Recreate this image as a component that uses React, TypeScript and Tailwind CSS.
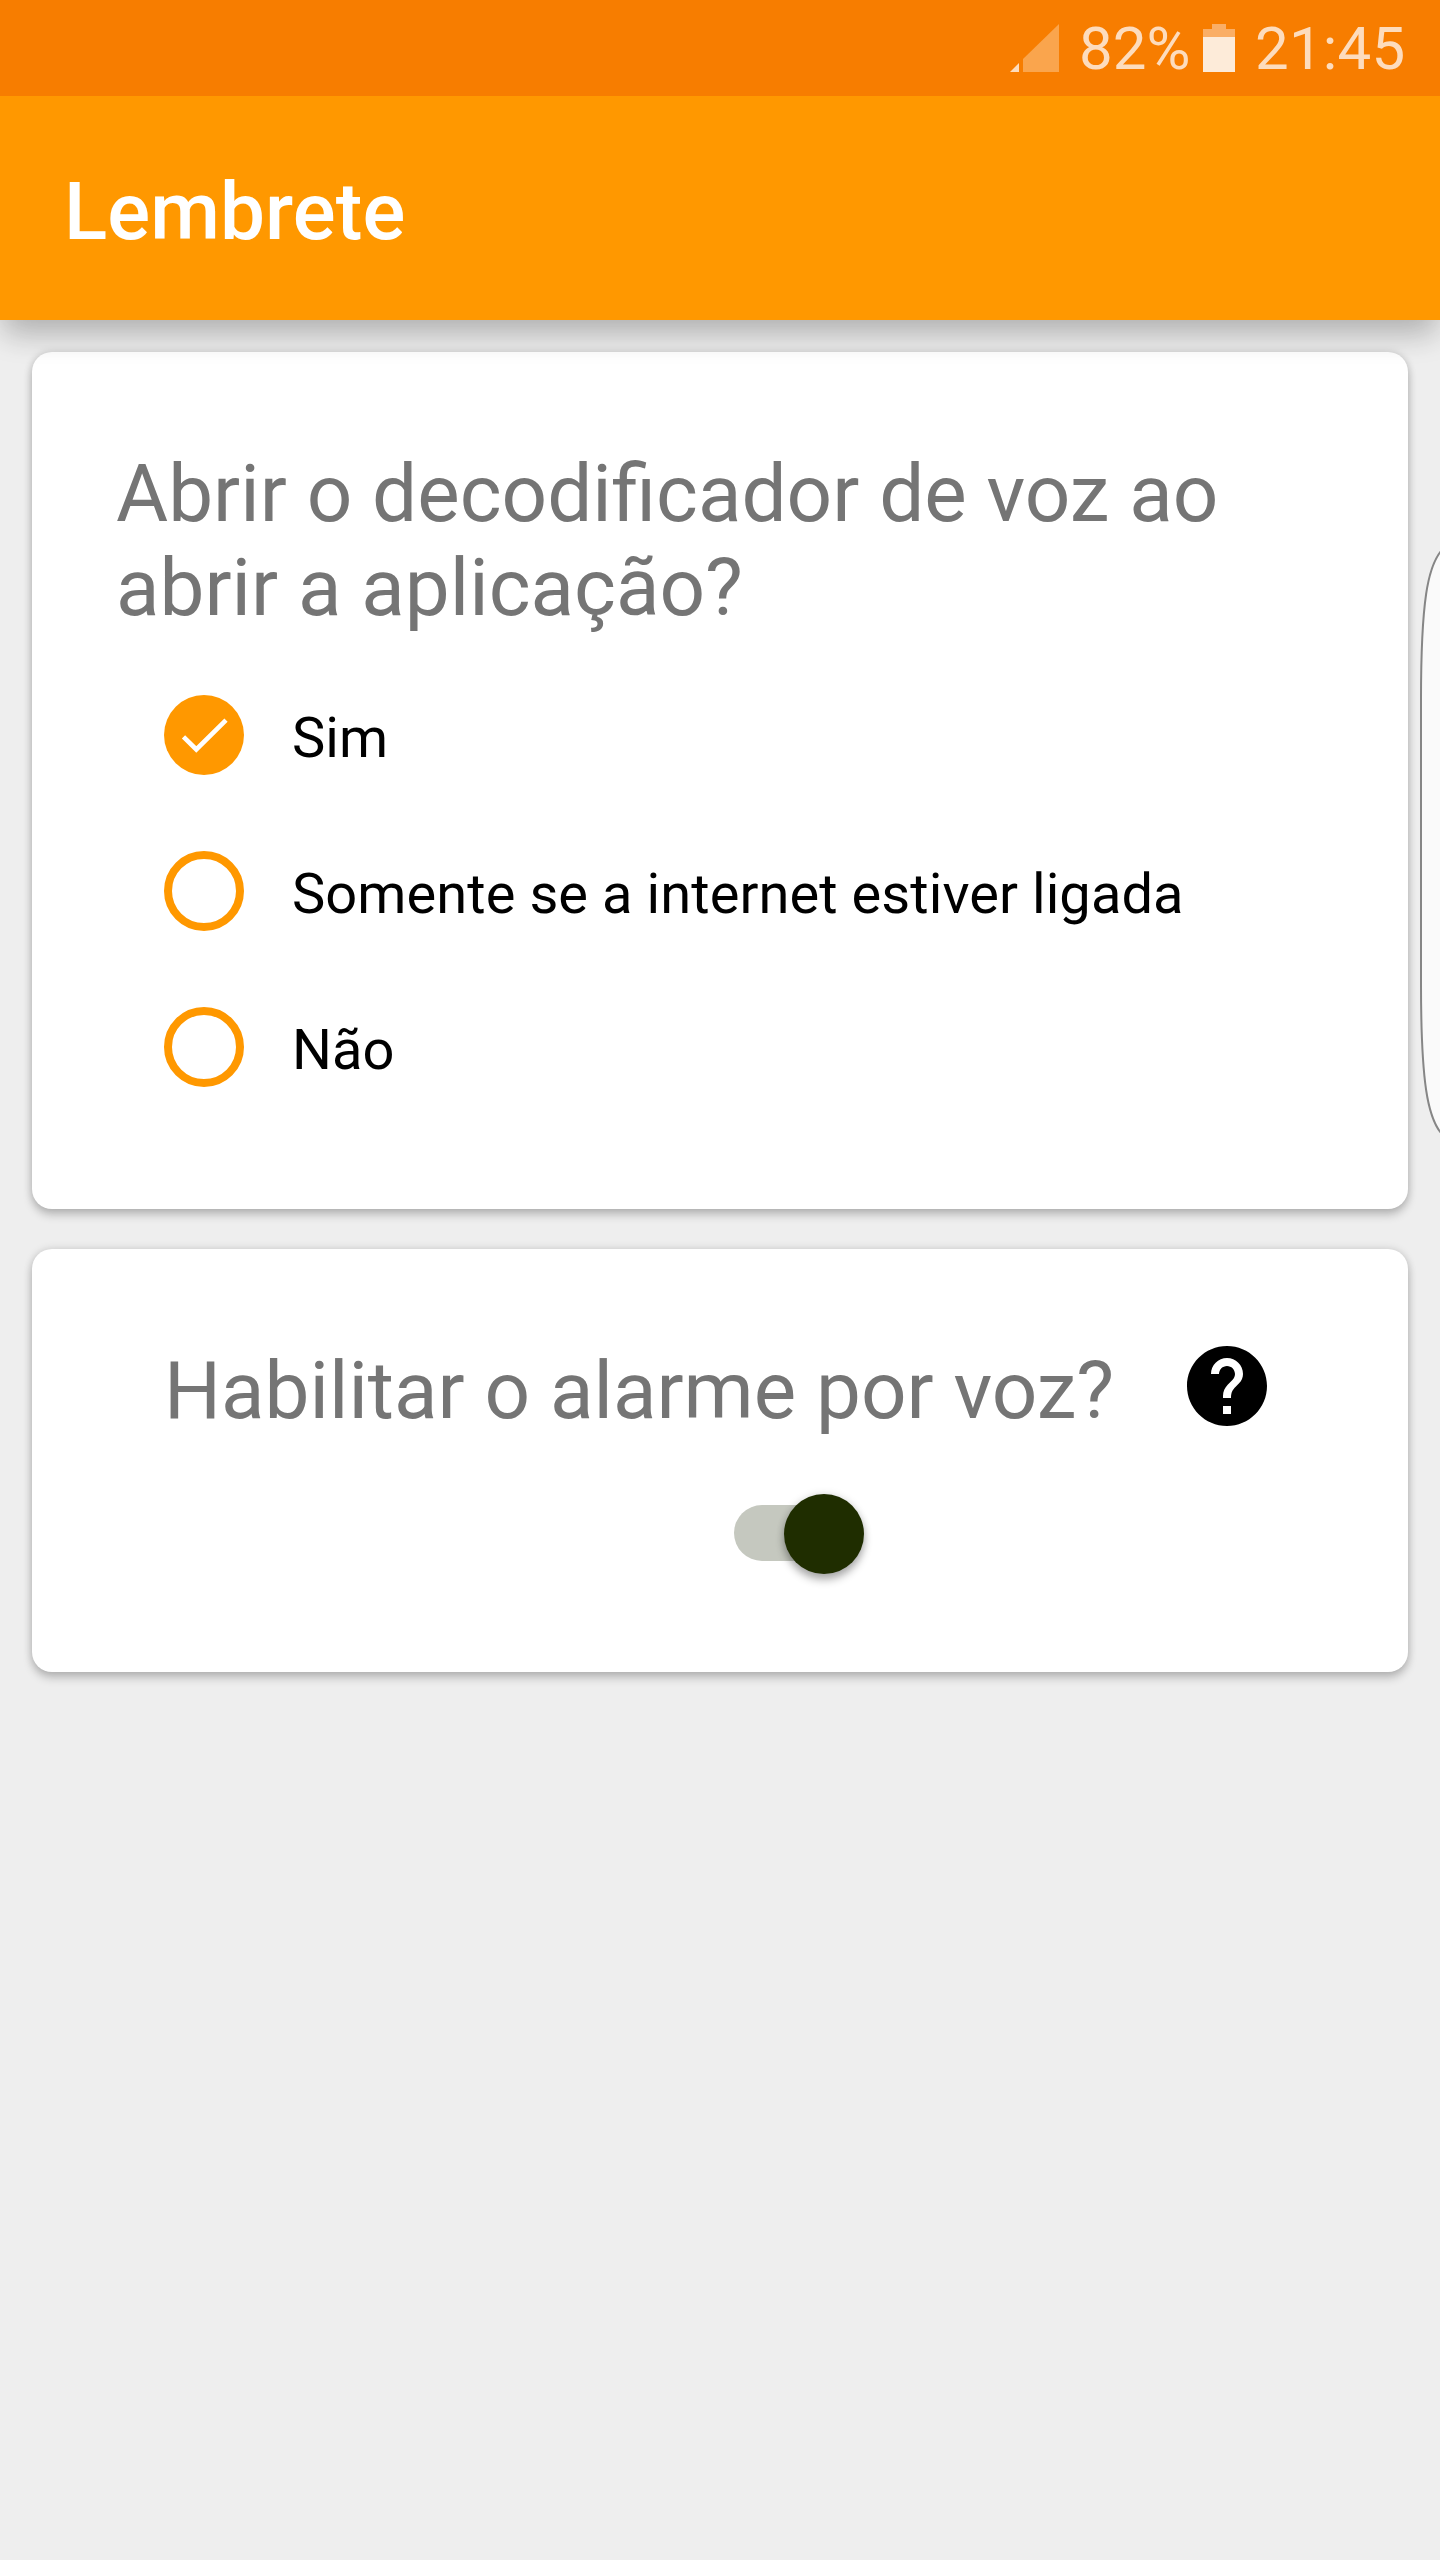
import { useState } from "react";
import { MdHelp } from "react-icons/md";

const options = ["Sim", "Somente se a internet estiver ligada", "Não"];

function StatusBar() {
  return (
    <div className="flex h-24 items-center bg-[#f77d00] pl-[1010px] text-[60px] leading-[70px] text-[#fddcbd]">
      <svg width="49" height="48" viewBox="0 0 49 48" className="shrink-0">
        <path d="M0 48L9 39V48Z" fill="#fddcbd" />
        <path d="M13 48V35L49 0V48Z" fill="#faa54d" />
      </svg>
      <span className="ml-5 w-[124px] shrink-0 pt-0.5">82%</span>
      <svg width="32" height="48" viewBox="0 0 32 48" className="shrink-0">
        <path d="M0 5H9V0H23V5H32V13H0Z" fill="#faae66" />
        <path d="M0 13H32V48H0Z" fill="#fdebd9" />
      </svg>
      <span className="ml-5 pt-0.5 tracking-[0.2px]">21:45</span>
    </div>
  );
}

function Header() {
  return (
    <header className="relative z-10 shadow-[0_18px_28px_-4px_rgba(0,0,0,0.22),0_4px_40px_rgba(0,0,0,0.07)]">
      <StatusBar />
      <div className="flex h-56 items-center bg-[#ff9800] px-16 pt-2">
        <h1 className="text-[80px] font-medium leading-[94px] tracking-[0.1px] text-white">Lembrete</h1>
      </div>
    </header>
  );
}

function RadioIcon({ checked }: { checked: boolean }) {
  if (!checked) {
    return <span className="size-20 shrink-0 rounded-full border-8 border-[#ff9800]" />;
  }
  return (
    <svg width="80" height="80" viewBox="0 0 80 80" className="shrink-0">
      <circle cx="40" cy="40" r="40" fill="#ff9800" />
      <path d="M19.5 41.8L32.3 54.5L62 25.2" fill="none" stroke="#fff" strokeWidth="4.6" />
    </svg>
  );
}

function EdgePanel() {
  return (
    <svg
      width="20"
      height="584"
      viewBox="0 0 20 584"
      className="absolute right-0 top-[550px] z-20"
    >
      <path
        d="M21 1C8 17 1 50 1 150V434C1 534 8 567 21 583"
        fill="#fafafa"
        stroke="#868686"
        strokeWidth="2"
      />
    </svg>
  );
}

export default function App() {
  const [selected, setSelected] = useState(0);
  const [voiceAlarm, setVoiceAlarm] = useState(true);

  return (
    <div className="relative h-[2560px] w-[1440px] overflow-hidden bg-[#eeeeee] font-[Roboto,sans-serif]">
      <Header />
      <main className="flex flex-col gap-10 px-8 pt-8">
        <section className="h-[857px] rounded-[20px] bg-white pl-[84px] pt-[95px] shadow-[0_6px_10px_rgba(0,0,0,0.2),0_0_8px_rgba(0,0,0,0.14)]">
          <h2 className="w-[1180px] text-[80px] leading-[94px] text-[#757575]">
            Abrir o decodificador de voz ao abrir a aplicação?
          </h2>
          <div className="mt-[22px] pl-12">
            {options.map((option, i) => (
              <button
                key={option}
                onClick={() => setSelected(i)}
                className="flex h-[156px] items-center gap-12"
              >
                <RadioIcon checked={selected === i} />
                <span className="pt-1.5 text-[56px] leading-[66px] tracking-[0.07px] text-black">{option}</span>
              </button>
            ))}
          </div>
        </section>

        <section className="h-[423px] rounded-[20px] bg-white pt-[89px] shadow-[0_6px_10px_rgba(0,0,0,0.2),0_0_8px_rgba(0,0,0,0.14)]">
          <div className="flex h-24 items-center pl-[132px]">
            <h2 className="w-[1015px] shrink-0 pt-2.5 text-[80px] leading-[94px] text-[#757575]">
              Habilitar o alarme por voz?
            </h2>
            <MdHelp className="size-24 shrink-0 text-black" />
          </div>
          <button
            onClick={() => setVoiceAlarm(!voiceAlarm)}
            className="ml-[702px] mt-[60px] flex h-20 w-[130px] items-center"
          >
            <span className="-mt-0.5 h-14 w-[120px] shrink-0 rounded-full bg-[#c5c8bf]" />
            <span
              className={
                voiceAlarm
                  ? "-ml-[70px] size-20 shrink-0 rounded-full bg-[#1f2d00] shadow-[0_6px_8px_rgba(0,0,0,0.3),0_0_8px_rgba(0,0,0,0.12)]"
                  : "-ml-[130px] size-20 shrink-0 rounded-full bg-[#fafafa] shadow-[0_6px_8px_rgba(0,0,0,0.3),0_0_8px_rgba(0,0,0,0.12)]"
              }
            />
          </button>
        </section>
      </main>
      <EdgePanel />
    </div>
  );
}
